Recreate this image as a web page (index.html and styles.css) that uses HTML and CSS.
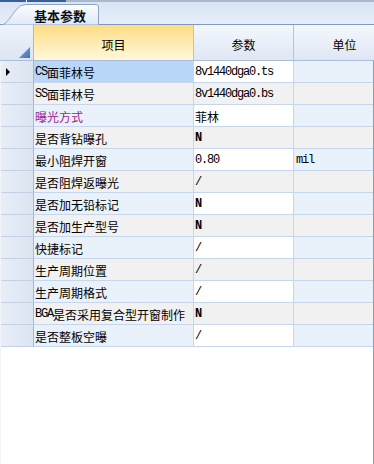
FILE: index.html
```html
<!DOCTYPE html>
<html lang="zh-CN">
<head>
<meta charset="utf-8">
<link rel="stylesheet" href="styles.css">
</head>
<body>
<div class="app">
  <div class="topline"></div>
  <div class="tabstrip">
    <div class="tab">
      <svg class="tab-shape" width="100" height="21" viewBox="0 0 100 21" aria-hidden="true">
        <defs>
          <linearGradient id="tg" x1="0" y1="0" x2="0" y2="1">
            <stop offset="0" stop-color="#fbfdff"/>
            <stop offset="1" stop-color="#dfe9f7"/>
          </linearGradient>
        </defs>
        <path d="M1 21 C 6 19.5, 10 12, 15 6 Q 19 0.5, 25 0.5 L 95 0.5 Q 97.5 0.5 97.5 3 L 97.5 21 Z" fill="url(#tg)" stroke="#8aa3c6" stroke-width="1"/>
      </svg>
      <span class="tab-label">基本参数</span>
    </div>
  </div>
  <div class="head">
    <div class="hc ind">
      <svg class="corner" width="12" height="11" viewBox="0 0 12 11" aria-hidden="true">
        <defs>
          <linearGradient id="cg" x1="0" y1="0" x2="1" y2="1">
            <stop offset="0" stop-color="#8fb0de"/>
            <stop offset="1" stop-color="#3f6db4"/>
          </linearGradient>
        </defs>
        <path d="M0 11 L11 0 L11 11 Z" fill="url(#cg)"/>
      </svg>
    </div>
    <div class="hc sel">项目</div>
    <div class="hc">参数</div>
    <div class="hc">单位</div>
  </div>
  <div class="body">
    <div class="row odd current">
      <div class="c ind"><span class="arrow"></span></div>
      <div class="c item selected"><span class="a">CS</span>面菲林号</div>
      <div class="c val"><span class="a">8v1440dga0.ts</span></div>
      <div class="c unit"></div>
    </div>
    <div class="row even">
      <div class="c ind"></div>
      <div class="c item"><span class="a">SS</span>面菲林号</div>
      <div class="c val"><span class="a">8v1440dga0.bs</span></div>
      <div class="c unit"></div>
    </div>
    <div class="row odd">
      <div class="c ind"></div>
      <div class="c item purple">曝光方式</div>
      <div class="c val">菲林</div>
      <div class="c unit"></div>
    </div>
    <div class="row even">
      <div class="c ind"></div>
      <div class="c item">是否背钻曝孔</div>
      <div class="c val"><span class="a b">N</span></div>
      <div class="c unit"></div>
    </div>
    <div class="row odd">
      <div class="c ind"></div>
      <div class="c item">最小阻焊开窗</div>
      <div class="c val"><span class="a">0.80</span></div>
      <div class="c unit"><span class="a">mil</span></div>
    </div>
    <div class="row even">
      <div class="c ind"></div>
      <div class="c item">是否阻焊返曝光</div>
      <div class="c val"><span class="a">/</span></div>
      <div class="c unit"></div>
    </div>
    <div class="row odd">
      <div class="c ind"></div>
      <div class="c item">是否加无铅标记</div>
      <div class="c val"><span class="a b">N</span></div>
      <div class="c unit"></div>
    </div>
    <div class="row even">
      <div class="c ind"></div>
      <div class="c item">是否加生产型号</div>
      <div class="c val"><span class="a b">N</span></div>
      <div class="c unit"></div>
    </div>
    <div class="row odd">
      <div class="c ind"></div>
      <div class="c item">快捷标记</div>
      <div class="c val"><span class="a">/</span></div>
      <div class="c unit"></div>
    </div>
    <div class="row even">
      <div class="c ind"></div>
      <div class="c item">生产周期位置</div>
      <div class="c val"><span class="a">/</span></div>
      <div class="c unit"></div>
    </div>
    <div class="row odd">
      <div class="c ind"></div>
      <div class="c item">生产周期格式</div>
      <div class="c val"><span class="a">/</span></div>
      <div class="c unit"></div>
    </div>
    <div class="row even">
      <div class="c ind"></div>
      <div class="c item"><span class="a">BGA</span>是否采用复合型开窗制作</div>
      <div class="c val"><span class="a b">N</span></div>
      <div class="c unit"></div>
    </div>
    <div class="row odd">
      <div class="c ind"></div>
      <div class="c item">是否整板空曝</div>
      <div class="c val"><span class="a">/</span></div>
      <div class="c unit"></div>
    </div>
    <div class="empty"></div>
  </div>
</div>
</body>
</html>
```
FILE: styles.css
```css
* { box-sizing: border-box; }
html, body { margin: 0; padding: 0; }
body {
  width: 374px;
  height: 464px;
  overflow: hidden;
  background: #fff;
  font-family: "Noto Sans CJK SC", "Noto Sans", sans-serif;
  font-size: 12px;
  color: #000;
}
.app {
  display: flex;
  flex-direction: column;
  width: 374px;
  height: 464px;
  overflow: hidden;
}
.topline {
  height: 2px;
  flex: none;
  background: linear-gradient(to right, #3a5f98 0 26px, #ffffff 26px 27px, #3a5f98 27px 66px, #a9b7c9 66px);
}
.tabstrip {
  height: 23px;
  flex: none;
  display: flex;
  align-items: flex-end;
  padding-left: 1px;
  background: linear-gradient(#d8e3f4, #e8eef9);
  border-bottom: 1px solid #7a99c6;
}
.tab {
  position: relative;
  width: 100px;
  height: 21px;
  margin-bottom: -1px;
  display: flex;
  align-items: center;
  padding-left: 33px;
  padding-top: 1px;
}
.tab-shape {
  position: absolute;
  left: 0;
  top: 0;
}
.tab-label {
  position: relative;
  font-size: 13px;
  font-weight: 700;
  color: #0c0c14;
  line-height: 1;
}
.head {
  display: grid;
  grid-template-columns: 34px 160px 100px 102px;
  height: 36px;
  flex: none;
  border-bottom: 1px solid #a9bcd8;
}
.hc {
  display: flex;
  align-items: center;
  justify-content: center;
  padding-top: 4px;
  border-right: 1px solid #b3c4dc;
  background: linear-gradient(#f4f7fc, #dfe7f4);
  font-size: 12px;
}
.hc.ind {
  position: relative;
  align-items: flex-end;
  justify-content: flex-end;
  padding: 0 2px 2px 0;
  background: linear-gradient(#eef3fa, #dce5f2);
  border-right: 1px solid #a7bad6;
}
.hc.sel {
  background: linear-gradient(#fedc82, #fff0c0 70%, #fff7df);
  border-right: 1px solid #c7c2a8;
}
.body {
  flex: 1;
  display: flex;
  flex-direction: column;
  border-right: 1px solid #8e9cad;
  border-left: 1px solid #f1f3f6;
  overflow: hidden;
}
.row {
  display: grid;
  grid-template-columns: 33px 160px 100px 102px;
  height: 22px;
  flex: none;
}
.c {
  display: flex;
  align-items: center;
  padding-left: 1px;
  padding-top: 1px;
  border-right: 1px solid #c6d6ec;
  border-bottom: 1px solid #c6d6ec;
  white-space: nowrap;
  overflow: hidden;
}
.c.ind {
  background: linear-gradient(to right, #e8eef7, #dbe4f1);
  border-right: 1px solid #a4b8d5;
  border-bottom: 1px solid #c3d1e6;
  padding-left: 5px;
}
.row.odd .item, .row.odd .unit { background: #e9f1fb; }
.row.odd .val { background: #ffffff; }
.row.even .item, .row.even .val, .row.even .unit { background: #f1f1f1; }
.row.current .item.selected { background: #b8d6f7; }
.c.unit { padding-left: 2px; }
.purple { color: #a0218c; }
.a {
  font-family: "Liberation Mono", "DejaVu Sans Mono", monospace;
  font-size: 12px;
  letter-spacing: -1.2px;
}
.a.b { font-weight: 700; }
.arrow {
  width: 0;
  height: 0;
  border-top: 4px solid transparent;
  border-bottom: 4px solid transparent;
  border-left: 4px solid #000;
  margin-top: -1px;
}
.empty {
  flex: 1;
  background: #fff;
}
```
